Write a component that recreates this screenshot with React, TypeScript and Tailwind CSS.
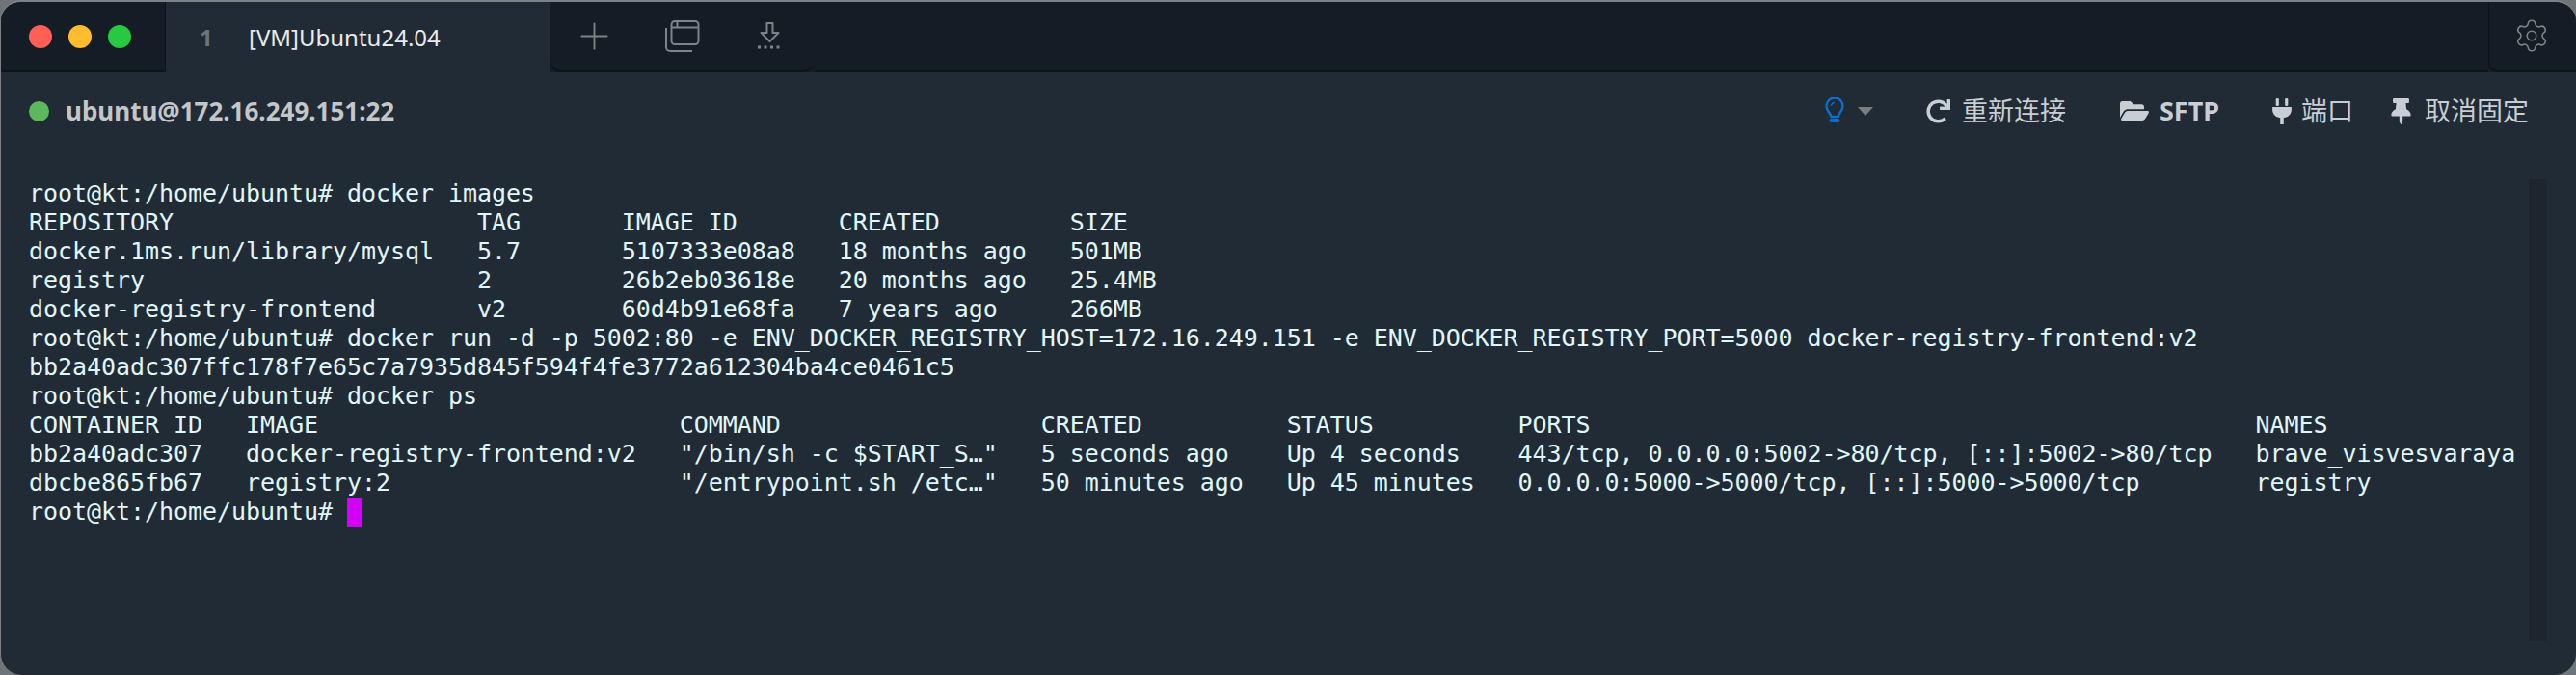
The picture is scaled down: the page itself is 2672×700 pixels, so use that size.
import React from 'react';
import { Plus, Settings } from 'lucide-react';
import { FaFolderOpen, FaRedo, FaThumbtack } from 'react-icons/fa';

// lay a terminal row out in fixed character columns
const cols = (widths: number[], cells: string[]) =>
  cells.map((c, i) => c.padEnd(widths[i] ?? 0)).join('');

const imageCols = [31, 10, 15, 16];
const psCols = [15, 30, 25, 17, 16, 51];
const prompt = 'root@kt:/home/ubuntu#';

const lines = [
  `${prompt} docker images`,
  cols(imageCols, ['REPOSITORY', 'TAG', 'IMAGE ID', 'CREATED', 'SIZE']),
  cols(imageCols, ['docker.1ms.run/library/mysql', '5.7', '5107333e08a8', '18 months ago', '501MB']),
  cols(imageCols, ['registry', '2', '26b2eb03618e', '20 months ago', '25.4MB']),
  cols(imageCols, ['docker-registry-frontend', 'v2', '60d4b91e68fa', '7 years ago', '266MB']),
  `${prompt} docker run -d -p 5002:80 -e ENV_DOCKER_REGISTRY_HOST=172.16.249.151 -e ENV_DOCKER_REGISTRY_PORT=5000 docker-registry-frontend:v2`,
  'bb2a40adc307ffc178f7e65c7a7935d845f594f4fe3772a612304ba4ce0461c5',
  `${prompt} docker ps`,
  cols(psCols, ['CONTAINER ID', 'IMAGE', 'COMMAND', 'CREATED', 'STATUS', 'PORTS', 'NAMES']),
  cols(psCols, ['bb2a40adc307', 'docker-registry-frontend:v2', '"/bin/sh -c $START_S…"', '5 seconds ago', 'Up 4 seconds', '443/tcp, 0.0.0.0:5002->80/tcp, [::]:5002->80/tcp', 'brave_visvesvaraya']),
  cols(psCols, ['dbcbe865fb67', 'registry:2', '"/entrypoint.sh /etc…"', '50 minutes ago', 'Up 45 minutes', '0.0.0.0:5000->5000/tcp, [::]:5000->5000/tcp', 'registry']),
];

const App: React.FC = () => {
  return (
    <div className="w-[2672px] h-[700px] bg-[#6f7478]">
      <div className="w-full h-full rounded-[22px] overflow-hidden bg-[#212b36] border-t-2 border-l border-[#7d8185] flex flex-col font-['Noto_Sans','Noto_Sans_CJK_SC',sans-serif]">
        {/* tab bar */}
        <div className="h-[73px] flex shrink-0 bg-[#141d26]">
          <div className="w-[171px] flex items-center gap-[17px] pl-[29px] border-r border-b-2 border-[#0e1319] rounded-br-[3px]">
            <span className="w-6 h-6 rounded-full bg-[#ff5f57]" />
            <span className="w-6 h-6 rounded-full bg-[#febc2e]" />
            <span className="w-6 h-6 rounded-full bg-[#28c840]" />
          </div>
          <div className="w-[398px] bg-[#212b36] flex items-center pl-[35px]">
            <span className="w-[51px] font-bold text-[#6b737b] text-[24px]">1</span>
            <span className="text-[#e8eaec] text-[24px] leading-none">[VM]Ubuntu24.04</span>
          </div>
          <div className="w-[275px] flex items-center border-b-2 border-l border-[#0e1319] rounded-b-[12px] pl-[23px] text-[#7f8386]">
            <Plus size={45} strokeWidth={1} />
            <svg className="ml-[50px]" width="38" height="34" viewBox="0 0 38 34" fill="none" stroke="currentColor" strokeWidth="2">
              <rect x="7.5" y="1" width="28" height="24" rx="3.5" />
              <path d="M7.5 7.5h28M13.5 1v6.5" />
              <path d="M2 8v20a4 4 0 0 0 4 4h23" />
            </svg>
            <svg className="ml-[58px]" width="28" height="32" viewBox="0 0 28 32" fill="none" stroke="currentColor" strokeWidth="2">
              <path d="M10.5 2h6v10h6L13.500 21 4.500 12h6z" strokeLinejoin="round" />
              <path d="M1 27h26" strokeWidth="3" strokeDasharray="3 3.500" />
            </svg>
          </div>
          <div className="flex-1 border-b-2 border-[#0e1319]" />
          <div className="w-[91px] flex items-center justify-end pr-[27px] pb-[2px] border-b-2 border-l border-[#0e1319] rounded-bl-[10px] text-[#7f8386]">
            <Settings size={38} strokeWidth={1} />
          </div>
        </div>

        {/* connection toolbar */}
        <div className="h-[78px] flex items-center shrink-0 pl-[29px] pr-[49px] pt-[2px]">
          <span className="w-[21px] h-[21px] rounded-full bg-[#5cb85c]" />
          <span className="ml-[17px] font-bold text-[26px] text-[#c4c6c8]">ubuntu@172.16.249.151:22</span>
          <div className="ml-auto flex items-center text-[27px] text-[#c9ced4]">
            <svg className="text-[#0a6fd0]" width="20" height="28" viewBox="0 0 20 28" fill="none" stroke="currentColor" strokeWidth="2.400">
              <path d="M6.500 20c0-3-5-5.500-5-11a8.500 8.500 0 0 1 17 0c0 5.500-5 8-5 11z" />
              <path d="M6.500 24h7" strokeWidth="4" strokeLinecap="round" />
              <path d="M6.500 9a3.500 3.500 0 0 1 3.500-3.500" strokeWidth="1.500" />
            </svg>
            <span className="ml-[14px] w-0 h-0 border-x-[8px] border-x-transparent border-t-[9px] border-t-[#7a7e82]" />
            <FaRedo className="ml-[55px]" size={25} />
            <span className="ml-[12px]">重新连接</span>
            <FaFolderOpen className="ml-[56px]" size={30} />
            <span className="ml-[11px] font-bold text-[27px]">SFTP</span>
            <svg className="ml-[55px]" width="20" height="27" viewBox="0 0 22 30" fill="currentColor">
              <rect x="4" y="0" width="3.500" height="9" rx="1.500" />
              <rect x="14.500" y="0" width="3.500" height="9" rx="1.500" />
              <path d="M0 10h22v3c0 5-3.500 8.500-9 9.500V30H9v-7.500C3.500 21.500 0 18 0 13z" />
            </svg>
            <span className="ml-[10px]">端口</span>
            <FaThumbtack className="ml-[36px]" size={27} />
            <span className="ml-[11px]">取消固定</span>
          </div>
        </div>

        {/* terminal */}
        <div className="flex-1 flex pl-[29px] pt-[33px] pr-[30px] pb-[35px]">
          <pre className="flex-1 font-['DejaVu_Sans_Mono',monospace] text-[25px] tracking-[-0.055px] leading-[30px] text-[#e0f7fa]">
            {lines.map(l => (
              <div key={l} className="h-[30px]">{l}</div>
            ))}
            <div className="h-[30px] flex">
              <span>{prompt} </span>
              <span className="w-[15px] h-[30px] bg-[#d500f9]" />
            </div>
          </pre>
          <div className="w-[19px] bg-[#1d262f]" />
        </div>
      </div>
    </div>
  );
};

export default App;
